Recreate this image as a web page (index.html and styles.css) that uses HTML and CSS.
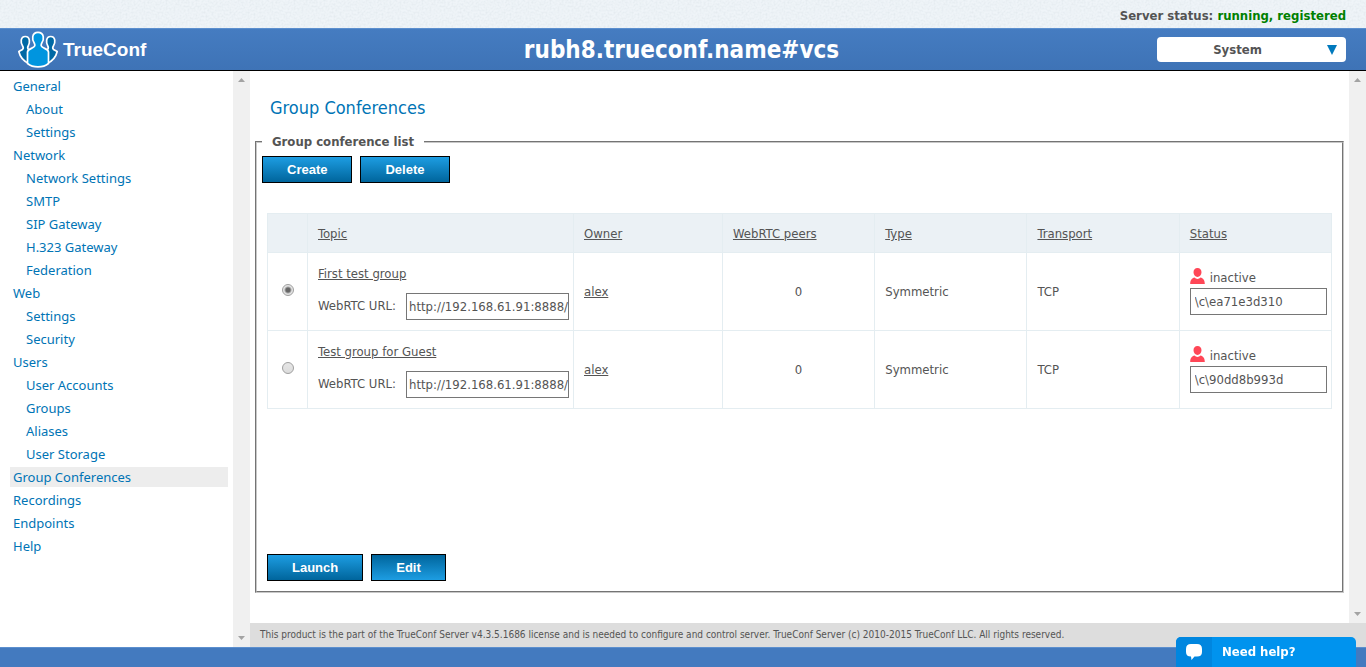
FILE: index.html
```html
<!DOCTYPE html>
<html lang="en">
<head>
<meta charset="utf-8">
<title>Group Conferences - TrueConf Server</title>
<link rel="stylesheet" href="styles.css">
</head>
<body>
<div class="status-bar">
  <p class="server-status">Server status: <span class="ok">running, registered</span></p>
</div>
<header class="header">
  <a class="logo" href="#">
    <svg class="logo-mark" viewBox="0 0 42 38" aria-hidden="true">
      <g stroke="#fff" stroke-width="1.700" stroke-linejoin="round">
        <path fill="#0069a5" d="M1.800 20.500L5.500 18.500C6.500 17.500 6.600 16.500 5.600 15C3.500 12 3.200 5.500 8.300 5.500C13.400 5.500 13 12 11.200 15C10.400 16.500 10.400 17.500 11.500 18.500L12.500 19V33C7 30.500 3 26 1.800 20.500Z"/>
        <path fill="#0069a5" d="M40.200 20.500L36.500 18.500C35.500 17.500 35.400 16.500 36.400 15C38.500 12 38.800 5.500 33.700 5.500C28.600 5.500 29 12 30.800 15C31.600 16.500 31.600 17.500 30.500 18.500L29.500 19V33C35 30.500 39 26 40.200 20.500Z"/>
        <path fill="#0095df" d="M10.500 32.500V21C10.500 17.500 17 17.500 17.800 14.800C18 13.500 17.800 13 17.200 12C15 9 14.300 1.300 21 1.300C27.700 1.300 27 9 24.800 12C24.200 13 24 13.500 24.200 14.800C25 17.500 31.500 17.500 31.500 21V32.500C26 37 16 37 10.500 32.500Z"/>
      </g>
    </svg>
    <span class="logo-text">TrueConf</span>
  </a>
  <h1 class="server-name">rubh8.trueconf.name#vcs</h1>
  <button class="system-menu" type="button">
    <span class="system-label">System</span>
    <svg class="system-arrow" viewBox="0 0 10 10" aria-hidden="true"><path fill="#0079bd" d="M0 0H10L5 10Z"/></svg>
  </button>
</header>
<div class="workspace">
  <aside class="sidebar">
    <nav class="menu">
      <a href="#">General</a>
      <a class="sub" href="#">About</a>
      <a class="sub" href="#">Settings</a>
      <a href="#">Network</a>
      <a class="sub" href="#">Network Settings</a>
      <a class="sub" href="#">SMTP</a>
      <a class="sub" href="#">SIP Gateway</a>
      <a class="sub" href="#">H.323 Gateway</a>
      <a class="sub" href="#">Federation</a>
      <a href="#">Web</a>
      <a class="sub" href="#">Settings</a>
      <a class="sub" href="#">Security</a>
      <a href="#">Users</a>
      <a class="sub" href="#">User Accounts</a>
      <a class="sub" href="#">Groups</a>
      <a class="sub" href="#">Aliases</a>
      <a class="sub" href="#">User Storage</a>
      <a class="current" href="#">Group Conferences</a>
      <a href="#">Recordings</a>
      <a href="#">Endpoints</a>
      <a href="#">Help</a>
    </nav>
    <div class="scroll-track">
      <svg viewBox="0 0 7 4" aria-hidden="true"><path fill="#a3a3a3" d="M0 4L3.500 0L7 4Z"/></svg>
      <svg viewBox="0 0 7 4" aria-hidden="true"><path fill="#a3a3a3" d="M0 0L3.500 4L7 0Z"/></svg>
    </div>
  </aside>
  <div class="content">
    <div class="pane">
      <main class="page">
        <h2 class="page-title">Group Conferences</h2>
        <fieldset class="list-box">
          <legend>Group conference list</legend>
          <div class="actions">
            <button class="btn" type="button">Create</button>
            <button class="btn" type="button">Delete</button>
          </div>
          <div class="list-area">
            <table class="grid">
              <colgroup>
                <col class="c-pick"><col class="c-topic"><col class="c-owner"><col class="c-mid"><col class="c-mid"><col class="c-mid"><col class="c-mid">
              </colgroup>
              <thead>
                <tr>
                  <th></th>
                  <th><a href="#">Topic</a></th>
                  <th><a href="#">Owner</a></th>
                  <th><a href="#">WebRTC peers</a></th>
                  <th><a href="#">Type</a></th>
                  <th><a href="#">Transport</a></th>
                  <th><a href="#">Status</a></th>
                </tr>
              </thead>
              <tbody>
                <tr>
                  <td class="pick"><input type="radio" name="group" aria-label="First test group" checked></td>
                  <td>
                    <div class="topic">
                      <a href="#">First test group</a>
                      <div class="url"><label for="url1">WebRTC URL:</label><input class="field" id="url1" type="text" value="http://192.168.61.91:8888/c/ea71e3d310"></div>
                    </div>
                  </td>
                  <td><a href="#">alex</a></td>
                  <td class="peers">0</td>
                  <td>Symmetric</td>
                  <td>TCP</td>
                  <td>
                    <label class="state" for="id1"><svg class="user" viewBox="0 0 15 16" aria-hidden="true"><path fill="#ff4757" d="M7.500 0C10 0 11.500 1.800 11.500 4.300C11.500 6.800 9.800 9 7.500 9C5.200 9 3.500 6.800 3.500 4.300C3.500 1.800 5 0 7.500 0ZM4.500 9.600C6 11.500 9 11.500 10.500 9.600C13 10.500 14.800 12 14.800 16H.200C.200 12 2 10.500 4.500 9.600Z"/></svg>inactive</label>
                    <input class="field" id="id1" type="text" value="\c\ea71e3d310">
                  </td>
                </tr>
                <tr>
                  <td class="pick"><input type="radio" name="group" aria-label="Test group for Guest"></td>
                  <td>
                    <div class="topic">
                      <a href="#">Test group for Guest</a>
                      <div class="url"><label for="url2">WebRTC URL:</label><input class="field" id="url2" type="text" value="http://192.168.61.91:8888/c/90dd8b993d"></div>
                    </div>
                  </td>
                  <td><a href="#">alex</a></td>
                  <td class="peers">0</td>
                  <td>Symmetric</td>
                  <td>TCP</td>
                  <td>
                    <label class="state" for="id2"><svg class="user" viewBox="0 0 15 16" aria-hidden="true"><path fill="#ff4757" d="M7.500 0C10 0 11.500 1.800 11.500 4.300C11.500 6.800 9.800 9 7.500 9C5.200 9 3.500 6.800 3.500 4.300C3.500 1.800 5 0 7.500 0ZM4.500 9.600C6 11.500 9 11.500 10.500 9.600C13 10.500 14.800 12 14.800 16H.200C.200 12 2 10.500 4.500 9.600Z"/></svg>inactive</label>
                    <input class="field" id="id2" type="text" value="\c\90dd8b993d">
                  </td>
                </tr>
              </tbody>
            </table>
            <div class="actions">
              <button class="btn" type="button">Launch</button>
              <button class="btn active" type="button">Edit</button>
            </div>
          </div>
        </fieldset>
      </main>
      <div class="scroll-track">
        <svg viewBox="0 0 7 4" aria-hidden="true"><path fill="#a3a3a3" d="M0 4L3.500 0L7 4Z"/></svg>
        <svg viewBox="0 0 7 4" aria-hidden="true"><path fill="#a3a3a3" d="M0 0L3.500 4L7 0Z"/></svg>
      </div>
    </div>
    <footer class="copyright">This product is the part of the TrueConf Server v4.3.5.1686 license and is needed to configure and control server. TrueConf Server (c) 2010-2015 TrueConf LLC. All rights reserved.</footer>
  </div>
</div>
<div class="bottom-bar"></div>
<button class="help" type="button">
  <span class="help-icon"><svg viewBox="0 0 16 16" aria-hidden="true"><path fill="#fff" d="M5 0H11Q16 0 16 5V8Q16 12.500 11 12.500H8.500L5.500 16L5 12.500Q0 12.500 0 8V5Q0 0 5 0Z"/></svg></span>
  <span class="help-label">Need help?</span>
</button>
</body>
</html>
```

FILE: styles.css
```css
* {
  box-sizing: border-box;
}

body {
  margin: 0;
  min-height: 100vh;
  display: flex;
  flex-direction: column;
  background: #fff;
  color: #545454;
  font: 13px/20px "DejaVu Sans Condensed", "DejaVu Sans", sans-serif;
}

h1,
h2,
p {
  margin: 0;
}

a {
  color: inherit;
}

button,
input {
  font: inherit;
  color: inherit;
}

/* top */
.status-bar {
  height: 28px;
  padding: 6px 20px 0;
  background: #eff4f8 url("data:image/svg+xml,%3Csvg xmlns='http://www.w3.org/2000/svg' width='128' height='128'%3E%3Cfilter id='n' x='0' y='0' width='100%25' height='100%25'%3E%3CfeTurbulence type='fractalNoise' baseFrequency='.5' numOctaves='2' stitchTiles='stitch'/%3E%3CfeColorMatrix values='0 0 0 0 .7 0 0 0 0 .76 0 0 0 0 .8 1 0 0 0 -.35'/%3E%3C/filter%3E%3Crect width='128' height='128' filter='url(%23n)'/%3E%3C/svg%3E");
}

.server-status {
  text-align: right;
  font-weight: bold;
}

.ok {
  color: #008000;
}

.header {
  display: grid;
  grid-template-columns: 1fr auto 1fr;
  align-items: center;
  height: 43px;
  padding: 0 20px 0 17px;
  border-top: 1px solid #5c8fce;
  border-bottom: 1px solid #000;
  background: linear-gradient(#457cc1, #3e73b6);
  color: #fff;
}

.logo {
  display: flex;
  align-items: center;
  gap: 4px;
  color: #fff;
  text-decoration: none;
}

.logo-mark {
  width: 42px;
  height: 38px;
}

.logo-text {
  font: bold 19px/36px "Liberation Sans", Arial, sans-serif;
}

.server-name {
  font-size: 24px;
  line-height: 40px;
}

.system-menu {
  justify-self: end;
  display: flex;
  align-items: center;
  width: 189px;
  height: 25px;
  padding: 0 9px 0 0;
  border: 0;
  border-radius: 4px;
  background: #fff;
  color: #545454;
  font-weight: bold;
}

.system-label {
  flex: 1;
  padding-right: 9px;
  text-align: center;
}

.system-arrow {
  width: 10px;
  height: 10px;
}

/* columns */
.workspace {
  flex: 1;
  display: flex;
}

.sidebar {
  flex: 0 0 250px;
  display: flex;
}

.menu {
  flex: 1;
  display: flex;
  flex-direction: column;
  gap: 3px;
  padding: 5px 5px 5px 10px;
  font-family: "Noto Sans", sans-serif;
}

.menu a {
  padding-left: 3px;
  color: #0074b5;
  text-decoration: none;
}

.menu .sub {
  padding-left: 16px;
}

.menu .current {
  background: #ededed;
}

.scroll-track {
  flex: 0 0 17px;
  display: flex;
  flex-direction: column;
  justify-content: space-between;
  align-items: center;
  padding: 7px 0;
  background: #f0f0f0;
}

.scroll-track svg {
  width: 7px;
  height: 4px;
}

.content {
  flex: 1;
  min-width: 0;
  display: flex;
  flex-direction: column;
}

.pane {
  flex: 1;
  display: flex;
}

.page {
  flex: 1;
  min-width: 0;
  display: flex;
  flex-direction: column;
  padding: 24px 5px 30px;
}

.page-title {
  padding-left: 15px;
  color: #0074b5;
  font-size: 18px;
  font-weight: normal;
  line-height: 26px;
}

.list-box {
  flex: 1;
  display: flex;
  flex-direction: column;
  min-width: 0;
  margin: 11px 0 0;
  padding: 4px 4px 5px 5px;
  border: 2px groove #c8c8c8;
}

.list-box legend {
  padding: 0 10px;
  font-weight: bold;
}

.actions {
  display: flex;
  gap: 8px;
}

.btn {
  height: 27px;
  padding: 0 24px;
  border: 1px solid #000;
  background: linear-gradient(#1d9de2, #00659c);
  color: #fff;
  font: bold 13px/20px "Liberation Sans", Arial, sans-serif;
}

.btn.active {
  background: linear-gradient(#00659c, #1d9de2);
}

.list-area {
  flex: 1;
  display: flex;
  flex-direction: column;
  justify-content: space-between;
  padding: 30px 6px 5px 5px;
}

/* conference table */
.grid {
  width: 100%;
  table-layout: fixed;
  border-collapse: collapse;
}

.c-pick {
  width: 40px;
}

.c-topic {
  width: 25%;
}

.c-owner {
  width: 14%;
}

.grid th,
.grid td {
  padding: 0 4px 0 10px;
  border: 1px solid #e4edf1;
  text-align: left;
  font-weight: normal;
}

.grid th {
  height: 39px;
  padding-top: 2px;
  background: #ebf1f5;
}

.grid td {
  height: 78px;
}

.grid .pick {
  padding: 0;
  text-align: center;
}

.pick input {
  appearance: none;
  width: 12px;
  height: 12px;
  margin: 0;
  border: 1px solid #a0a0a0;
  border-radius: 50%;
  background: linear-gradient(#e6e6e6, #dcdcdc);
}

.pick input:checked {
  background: radial-gradient(circle, #666 0 2px, #e4e4e4 4px);
}

.grid .peers {
  padding: 0;
  text-align: center;
}

.topic {
  display: flex;
  flex-direction: column;
  align-items: flex-start;
  gap: 9px;
}

.url {
  display: flex;
  align-items: center;
  gap: 10px;
  width: 100%;
}

.url label {
  flex: none;
}

.field {
  display: block;
  width: 100%;
  min-width: 0;
  height: 27px;
  padding: 0 0 0 4px;
  border: 1px solid #767676;
  background: #fff;
}

.url .field {
  padding-left: 2px;
}

.state {
  display: flex;
  align-items: flex-end;
  gap: 5px;
}

.user {
  width: 15px;
  height: 16px;
  margin-bottom: 4px;
}

/* bottom */
.copyright {
  padding: 2px 10px;
  background: #ddd;
  font-size: 10px;
}

.bottom-bar {
  height: 20px;
  border-top: 1px solid #5c8fce;
  background: #437abf;
}

.help {
  position: fixed;
  right: 10px;
  bottom: 0;
  display: flex;
  width: 180px;
  height: 30px;
  padding: 0;
  overflow: hidden;
  border: 0;
  border-radius: 5px 5px 0 0;
  background: #0093ee;
  color: #fff;
  font-weight: bold;
}

.help-icon {
  display: flex;
  align-items: center;
  justify-content: center;
  width: 36px;
  height: 30px;
  background: #0086df;
}

.help-icon svg {
  width: 16px;
  height: 16px;
}

.help-label {
  padding-left: 10px;
  line-height: 29px;
}
```
